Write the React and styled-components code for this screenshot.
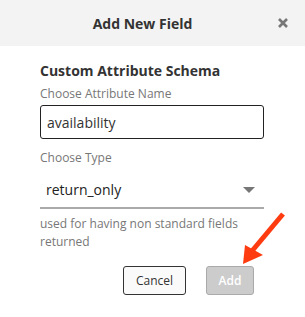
import styled, { createGlobalStyle } from 'styled-components';

const Global = createGlobalStyle`
  body {
    margin: 0;
    background: #fff;
    font-family: 'Open Sans', 'Liberation Sans', sans-serif;
  }
`;

const Dialog = styled.div`
  position: relative;
  width: 305px;
  height: 317px;
  background: #fff;
`;

const Header = styled.div`
  height: 46px;
  background: #f3f3f3;
  display: flex;
  align-items: center;
  justify-content: center;
  position: relative;
`;

const Title = styled.h2`
  margin: 0 20px 0 0;
  font-size: 14px;
  font-weight: 700;
  color: #333;
`;

const Close = styled.button`
  position: absolute;
  right: 16px;
  top: 17px;
  width: 12px;
  height: 12px;
  padding: 0;
  border: 0;
  background: none;
  display: flex;
`;

const Body = styled.div`
  padding: 16px 41px 0 40px;
  display: flex;
  flex-direction: column;
`;

const Heading = styled.h3`
  margin: 0;
  font-size: 14px;
  line-height: 18px;
  font-weight: 700;
  color: #333;
`;

const Label = styled.label`
  margin-top: ${(p) => p.$gap || 6}px;
  font-size: 12px;
  line-height: 16px;
  color: #777;
`;

const Input = styled.div`
  margin-top: 3px;
  height: 34px;
  box-sizing: border-box;
  border: 1px solid #222;
  border-radius: 3px;
  display: flex;
  align-items: center;
  padding: 0 6px;
  font-size: 14px;
  color: #333;
`;

const Select = styled.div`
  margin-top: 10px;
  height: 33px;
  box-sizing: border-box;
  border-bottom: 2px solid #aaa;
  display: flex;
  align-items: center;
  justify-content: space-between;
  padding: 0 6px 4px 6px;
  font-size: 14px;
  color: #222;
`;

const Caret = styled.span`
  width: 0;
  height: 0;
  border-left: 6px solid transparent;
  border-right: 6px solid transparent;
  border-top: 6px solid #777;
  margin-right: 3px;
`;

const Help = styled.p`
  margin: 6px 0 0;
  font-size: 12px;
  line-height: 18px;
  color: #777;
`;

const Actions = styled.div`
  margin-top: 15px;
  display: flex;
  justify-content: flex-end;
  gap: 20px;
  padding-right: 10px;
`;

const Button = styled.button`
  height: 29px;
  width: ${(p) => p.$w}px;
  box-sizing: border-box;
  border-radius: 3px;
  font-family: inherit;
  font-size: 12px;
  padding: 0;
  border: 1px solid ${(p) => (p.$disabled ? '#aaa' : '#333')};
  background: ${(p) => (p.$disabled ? '#cccccc' : '#fafafa')};
  color: ${(p) => (p.$disabled ? '#fff' : '#333')};
  font-weight: ${(p) => (p.$disabled ? 600 : 400)};
`;

const Arrow = styled.svg`
  position: absolute;
  left: 236px;
  top: 206px;
`;

export default function App() {
  return (
    <Dialog>
      <Global />
      <Header>
        <Title>Add New Field</Title>
        <Close aria-label="close">
          <svg width="12" height="12" viewBox="0 0 12 12">
            <path d="M2 2 L10 10 M10 2 L2 10" stroke="#777" strokeWidth="2.6" />
          </svg>
        </Close>
      </Header>
      <Body>
        <Heading>Custom Attribute Schema</Heading>
        <Label>Choose Attribute Name</Label>
        <Input>availability</Input>
        <Label $gap={11}>Choose Type</Label>
        <Select>
          return_only
          <Caret />
        </Select>
        <Help>used for having non standard fields returned</Help>
        <Actions>
          <Button $w={63}>Cancel</Button>
          <Button $w={48} $disabled>Add</Button>
        </Actions>
      </Body>
      <Arrow width="54" height="64" viewBox="0 0 54 64">
        <path d="M47 8 L16 45" stroke="#ff3b10" strokeWidth="5" />
        <polygon points="7,58 9,39 27,49" fill="#ff3b10" />
      </Arrow>
    </Dialog>
  );
}
